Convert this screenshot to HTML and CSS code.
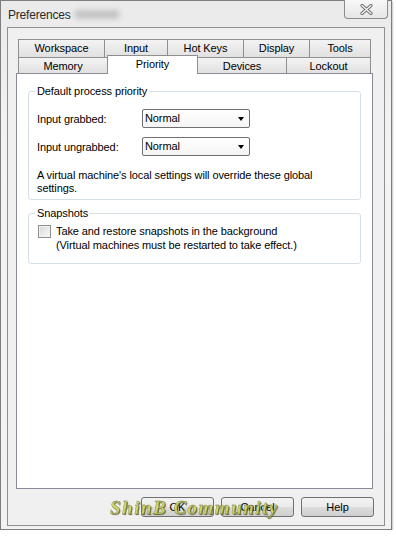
FILE: index.html
```html
<!DOCTYPE html>
<html lang="en">
<head>
  <meta charset="UTF-8">
  <title>Preferences</title>
  <link rel="stylesheet" href="styles.css">
</head>
<body>
  <div class="window">
    <div class="titlebar">
      <span class="title">Preferences</span>
      <span class="title-smudge"></span>
      <button class="close-button">
        <svg width="13" height="11" viewBox="0 0 13 11">
          <path d="M2 1.5 L11 9.5 M11 1.5 L2 9.5" stroke="#6b6b6b" stroke-width="3.2" stroke-linecap="round" fill="none"/>
          <path d="M2 1.5 L11 9.5 M11 1.5 L2 9.5" stroke="#f6f6f6" stroke-width="1.4" stroke-linecap="round" fill="none"/>
        </svg>
      </button>
    </div>

    <div class="client">
      <div class="tabs">
        <div class="tab-row">
          <div class="tab w-workspace">Workspace</div>
          <div class="tab w-input">Input</div>
          <div class="tab w-hotkeys">Hot Keys</div>
          <div class="tab w-display">Display</div>
          <div class="tab w-tools">Tools</div>
        </div>
        <div class="tab-row front">
          <div class="tab w-memory">Memory</div>
          <div class="tab w-priority selected">Priority</div>
          <div class="tab w-devices">Devices</div>
          <div class="tab w-lockout">Lockout</div>
        </div>
      </div>

      <div class="panel">
        <fieldset class="group">
          <legend>Default process priority</legend>
          <div class="field first">
            <span class="field-label">Input grabbed:</span>
            <div class="select">Normal<span class="arrow"></span></div>
          </div>
          <div class="field">
            <span class="field-label">Input ungrabbed:</span>
            <div class="select">Normal<span class="arrow"></span></div>
          </div>
          <p class="note">A virtual machine's local settings will override these global<br>settings.</p>
        </fieldset>

        <fieldset class="group snapshots">
          <legend>Snapshots</legend>
          <label class="check">
            <span class="box"></span>
            <span class="check-text">Take and restore snapshots in the background<br>(Virtual machines must be restarted to take effect.)</span>
          </label>
        </fieldset>
      </div>

      <div class="buttons">
        <button class="btn">OK</button>
        <button class="btn">Cancel</button>
        <button class="btn">Help</button>
      </div>
    </div>

    <div class="watermark">ShinB Community</div>
  </div>
</body>
</html>
```

FILE: styles.css
```css
* {
  box-sizing: border-box;
}

body {
  margin: 0;
  background: #fff;
  font-family: "Liberation Sans", Arial, sans-serif;
  font-size: 11px;
  letter-spacing: -0.1px;
  color: #000;
}

.window {
  position: relative;
  width: 392px;
  height: 530px;
  border: 1px solid #7e7e7e;
  background: linear-gradient(#eaeaea, #f4f4f4 30%, #f2f2f2);
  box-shadow: 0 1px 2px rgba(0, 0, 0, 0.55);
}

/* title bar */
.titlebar {
  height: 26px;
  display: flex;
  align-items: center;
  padding-left: 7px;
}

.title {
  font-size: 12px;
  letter-spacing: -0.2px;
  color: #2a2a2a;
  margin-top: 1px;
}

.title-smudge {
  width: 44px;
  height: 7px;
  margin-left: 4px;
  margin-top: 1px;
  background: #8e8e8e;
  filter: blur(3px);
  opacity: 0.55;
}

.close-button {
  align-self: flex-start;
  margin: -1px 3px 0 auto;
  width: 44px;
  height: 19px;
  padding: 0;
  border: 1px solid #8c8c8c;
  border-top: none;
  border-radius: 0 0 4px 4px;
  background: linear-gradient(#f8f8f8, #e6e6e6);
  display: flex;
  align-items: center;
  justify-content: center;
}

/* client area */
.client {
  height: 499px;
  margin: 0 6px;
  border: 1px solid #8e8f8f;
  background: #f0f0f0;
  padding: 11px 11px 0 8px;
}

.tabs {
  margin-left: 2px;
}

.tab-row {
  display: flex;
  align-items: flex-start;
}

.tab {
  height: 18px;
  margin-left: -1px;
  border: 1px solid #8e8f8f;
  border-bottom: none;
  background: linear-gradient(#f3f3f3, #e1e1e1);
  text-align: center;
  line-height: 16px;
}

.tab:first-child {
  margin-left: 0;
}

.tab-row.front .tab {
  height: 16px;
  line-height: 16px;
}

.tab-row.front .tab.selected {
  position: relative;
  z-index: 1;
  height: 19px;
  margin-top: -2px;
  margin-bottom: -1px;
  background: #fff;
  line-height: 16px;
}

.w-workspace { width: 87px; }
.w-input { width: 64px; }
.w-hotkeys { width: 77px; }
.w-display { width: 67px; }
.w-tools { width: 62px; }
.w-memory { width: 90px; }
.w-priority { width: 91px; }
.w-devices { width: 90px; }
.w-lockout { width: 85px; }

.panel {
  position: relative;
  width: 357px;
  height: 416px;
  border: 1px solid #898c95;
  background: #fff;
  padding: 11px 11px 0;
}

/* group boxes */
.group {
  margin: 0;
  min-width: 0;
  padding: 0 8px 4px;
  border: 1px solid #d5dfe5;
  border-radius: 3px;
}

.group legend {
  padding: 0 2px;
  margin-left: -2px;
  line-height: 13px;
}

.field {
  display: flex;
  align-items: center;
  height: 19px;
  margin-top: 9px;
}

.field.first {
  margin-top: 11px;
}

.field-label {
  width: 105px;
}

.select {
  position: relative;
  width: 108px;
  height: 19px;
  border: 1px solid #707070;
  border-radius: 2px;
  background: linear-gradient(#ffffff, #f4f4f4);
  padding-left: 2px;
  line-height: 17px;
}

.arrow {
  position: absolute;
  right: 5px;
  top: 7px;
  border-left: 3.5px solid transparent;
  border-right: 3.5px solid transparent;
  border-top: 4px solid #000;
}

.note {
  margin: 13px 0 0;
  line-height: 13px;
}

.snapshots {
  margin-top: 7px;
  padding: 4px 8px 11px;
}

.check {
  display: flex;
  align-items: flex-start;
}

.box {
  width: 13px;
  height: 13px;
  margin: 1px 5px 0 1px;
  border: 1px solid #8e8f8f;
  background: linear-gradient(135deg, #d8d8d8, #f9f9f9);
  box-shadow: inset 0 0 0 1px #f2f2f2;
}

.check-text {
  line-height: 14px;
}

/* buttons */
.buttons {
  display: flex;
  justify-content: flex-end;
  gap: 7px;
  margin: 8px -1px 0 0;
}

.btn {
  width: 73px;
  height: 20px;
  padding: 0;
  border: 1px solid #707070;
  border-radius: 3px;
  background: linear-gradient(#f2f2f2 0%, #ebebeb 50%, #dddddd 51%, #cfcfcf 100%);
  font-family: "Liberation Sans", Arial, sans-serif;
  font-size: 11px;
  color: #000;
}

.watermark {
  position: absolute;
  left: 109px;
  top: 496px;
  font-family: "Liberation Serif", serif;
  font-style: italic;
  font-weight: bold;
  font-size: 19px;
  letter-spacing: 1.5px;
  color: #ccd35a;
  -webkit-text-stroke: 0.3px #5a5c24;
  text-shadow: 1px 1px 1px #5a5a30;
  opacity: 0.9;
  pointer-events: none;
}
```
